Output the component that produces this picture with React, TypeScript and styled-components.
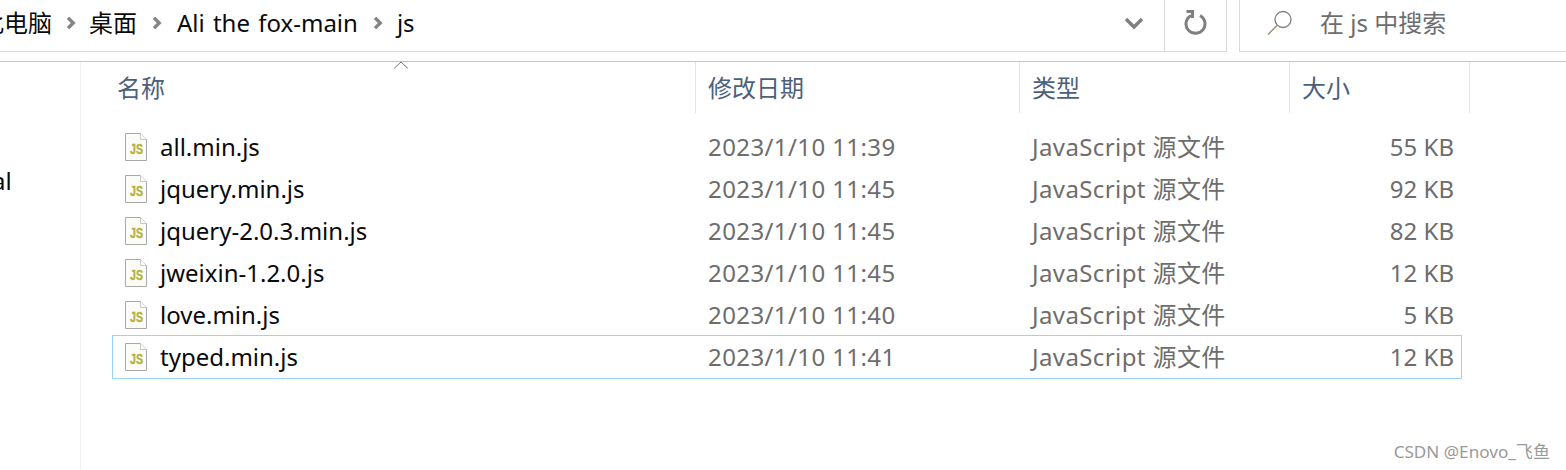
import React from "react";
import styled, { createGlobalStyle } from "styled-components";

const Global = createGlobalStyle`
  html, body { margin: 0; padding: 0; background: #fff; }
  body { width: 1566px; height: 470px; overflow: hidden; font-family: "Noto Sans", "Noto Sans CJK SC", sans-serif; }
`;
const Page = styled.div`
  position: relative; width: 1566px; height: 470px; overflow: hidden; background: #fff;
  display: flex; flex-direction: column;
`;
const TopBar = styled.div`
  display: flex; height: 52px; flex: none;
`;
const AddressBox = styled.div`
  width: 1227px; flex: none; box-sizing: border-box; height: 52px;
  border-bottom: 1px solid #d9d9d9; border-right: 1px solid #d9d9d9;
  display: flex; align-items: center; overflow: hidden;
`;
const Crumbs = styled.div`
  flex: 1; display: flex; align-items: center; margin-left: -20px; overflow: hidden;
  padding-bottom: 6px;
`;
const Crumb = styled.span<{ $wide?: boolean }>`
  font-size: 24px; color: #0a0a0a; white-space: nowrap; line-height: 32px;
  word-spacing: ${p => p.$wide ? 2 : 0}px;
`;
const Sep = styled.svg<{ $l: number; $r: number }>`
  width: 10px; height: 12px; margin: 0 ${p => p.$r}px 0 ${p => p.$l}px; flex: none;
`;
const Chevron = styled.svg`
  width: 20px; height: 14px; margin-right: 20px; margin-bottom: 6px; flex: none;
`;
const RefreshCell = styled.div`
  width: 62px; height: 51px; flex: none; box-sizing: border-box; border-left: 1px solid #d9d9d9;
  display: flex; align-items: center; justify-content: center; padding-bottom: 6px;
`;
const SearchBox = styled.div`
  margin-left: 12px; flex: 1; height: 52px; box-sizing: border-box;
  border-left: 1px solid #d9d9d9; border-bottom: 1px solid #d9d9d9;
  display: flex; align-items: center; padding-left: 27px; padding-bottom: 6px;
`;
const SearchText = styled.span`
  font-size: 24px; color: #6d6d6d; margin-left: 27px; line-height: 32px; white-space: nowrap;
`;
const Body = styled.div`
  margin-top: 9px; flex: 1; display: flex; border-top: 1px solid #c4c4c4; min-height: 0;
`;
const Sidebar = styled.div`
  width: 81px; flex: none; box-sizing: border-box; border-right: 1px solid #f2f2f2;
  padding-top: 103px; font-size: 24px; color: #0a0a0a; line-height: 32px; overflow: hidden;
`;
const SidebarText = styled.div`
  margin-left: -8px;
`;
const Main = styled.div`
  position: relative; flex: 1; min-width: 0; padding-left: 31px;
`;
const SortCaret = styled.svg`
  position: absolute; left: 312px; top: -1px; width: 16px; height: 8px;
`;
const Header = styled.div`
  display: flex; height: 51px; width: 1389px;
`;
const HeadCell = styled.div<{ $w: number }>`
  width: ${p => p.$w}px; flex: none; box-sizing: border-box;
  border-right: 1px solid #e5e5e5; padding-left: ${p => p.$w === 584 ? 5 : 12}px;
  font-size: 24px; color: #4c607a; line-height: 52px; white-space: nowrap;
`;
const Rows = styled.div`
  margin-top: 13px; width: 1350px; display: flex; flex-direction: column;
`;
const Row = styled.div<{ $sel?: boolean }>`
  height: ${p => p.$sel ? 44 : 42}px; margin: ${p => p.$sel ? "-1px 0" : "0"}; box-sizing: border-box; display: grid;
  grid-template-columns: 595px 324px 1fr 120px; align-items: center;
  border: 1px solid ${p => p.$sel ? "#99d1ff" : "transparent"};
`;
const NameCell = styled.div`
  display: flex; align-items: center; padding-left: 12px;
  font-size: 24px; color: #0a0a0a; white-space: nowrap;
`;
const FileName = styled.span`
  margin-left: 13px; line-height: 32px;
`;
const Meta = styled.div`
  font-size: 24px; color: #6d6d6d; white-space: nowrap; line-height: 32px; letter-spacing: 0.4px;
`;
const Size = styled(Meta)`
  text-align: right; padding-right: 7px; letter-spacing: 0;
`;
const Watermark = styled.div`
  position: absolute; right: 16px; bottom: 7px; font-size: 17.1px; color: #9a9a9a; white-space: nowrap;
  line-height: 22px;
`;

const SepIcon = ({ l, r }: { l: number; r: number }) => (
  <Sep $l={l} $r={r} viewBox="0 0 10 12"><path d="M2 .8 L7.2 6 L2 11.2" fill="none" stroke="#858585" strokeWidth="3.4" /></Sep>
);
const JsIcon = () => (
  <svg width="22" height="29" viewBox="0 0 22 29" style={{ flex: "none" }}>
    <path d="M.5.5H15.5L21.5 6.5V27.5H.5Z" fill="#fbfbf8" stroke="#a8a8a8" />
    <path d="M15.5.5V6.5H21.5" fill="#fff" stroke="#c8c8c8" />
    <text x="5" y="21" fontSize="14" fontWeight="700" fill="#b5b23c" stroke="#b5b23c" strokeWidth=".4" fontFamily="Liberation Sans, sans-serif" textLength="13" lengthAdjust="spacingAndGlyphs">JS</text>
  </svg>
);

const files = [
  ["all.min.js", "2023/1/10 11:39", "55 KB"],
  ["jquery.min.js", "2023/1/10 11:45", "92 KB"],
  ["jquery-2.0.3.min.js", "2023/1/10 11:45", "82 KB"],
  ["jweixin-1.2.0.js", "2023/1/10 11:45", "12 KB"],
  ["love.min.js", "2023/1/10 11:40", "5 KB"],
  ["typed.min.js", "2023/1/10 11:41", "12 KB"],
];

export default function App() {
  return (
    <Page>
      <Global />
      <TopBar>
        <AddressBox>
          <Crumbs>
            <Crumb>此电脑</Crumb>
            <SepIcon l={14} r={13} />
            <Crumb>桌面</Crumb>
            <SepIcon l={15} r={15} />
            <Crumb $wide>Ali the fox-main</Crumb>
            <SepIcon l={15} r={14} />
            <Crumb>js</Crumb>
          </Crumbs>
          <Chevron viewBox="0 0 20 14"><path d="M2 3 L10 11 L18 3" fill="none" stroke="#7f7f7f" strokeWidth="3.4" /></Chevron>
          <RefreshCell>
            <svg width="24" height="26" viewBox="0 0 24 26">
              <path d="M7 5.5 A9.5 9.5 0 1 0 16 5.5" fill="none" stroke="#808080" strokeWidth="3" />
              <path d="M3.5 1.5 H9.5 V8" fill="none" stroke="#808080" strokeWidth="3" transform="translate(-1 0)" />
            </svg>
          </RefreshCell>
        </AddressBox>
        <SearchBox>
          <svg width="26" height="26" viewBox="0 0 26 26">
            <circle cx="16" cy="9.5" r="8" fill="none" stroke="#7d7d7d" strokeWidth="1.3" />
            <path d="M10 15.5 L1 24.5" stroke="#a08a70" strokeWidth="1.5" />
          </svg>
          <SearchText>在 js 中搜索</SearchText>
        </SearchBox>
      </TopBar>
      <Body>
        <Sidebar><SidebarText>al</SidebarText></Sidebar>
        <Main>
          <SortCaret viewBox="0 0 16 8"><path d="M1 7.5 L8 1 L15 7.5" fill="none" stroke="#777" strokeWidth="1" /></SortCaret>
          <Header>
            <HeadCell $w={584}>名称</HeadCell>
            <HeadCell $w={324}>修改日期</HeadCell>
            <HeadCell $w={270}>类型</HeadCell>
            <HeadCell $w={180}>大小</HeadCell>
          </Header>
          <Rows>
            {files.map((f, i) => (
              <Row key={f[0]} $sel={i === 5}>
                <NameCell><JsIcon /><FileName>{f[0]}</FileName></NameCell>
                <Meta>{f[1]}</Meta>
                <Meta>JavaScript 源文件</Meta>
                <Size>{f[2]}</Size>
              </Row>
            ))}
          </Rows>
        </Main>
      </Body>
      <Watermark>CSDN @Enovo_飞鱼</Watermark>
    </Page>
  );
}
